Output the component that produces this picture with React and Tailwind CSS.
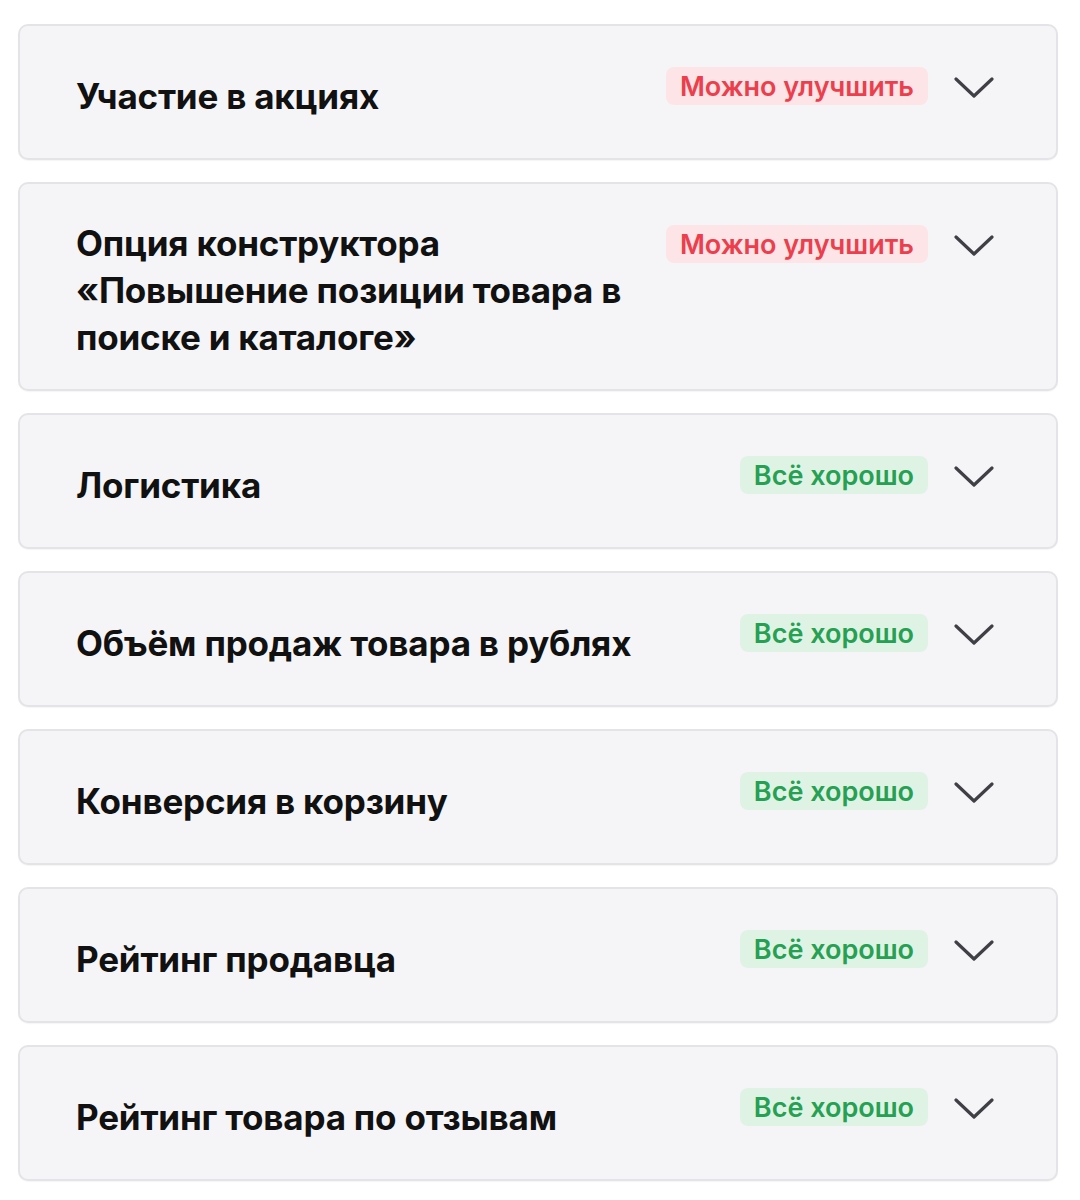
import React from 'react';

const items = [
  { title: 'Участие в акциях', status: 'bad' },
  { title: 'Опция конструктора «Повышение позиции товара в поиске и каталоге»', status: 'bad' },
  { title: 'Логистика', status: 'good' },
  { title: 'Объём продаж товара в рублях', status: 'good' },
  { title: 'Конверсия в корзину', status: 'good' },
  { title: 'Рейтинг продавца', status: 'good' },
  { title: 'Рейтинг товара по отзывам', status: 'good' },
];

const Chevron = () => (
  <svg width="40" height="24" viewBox="0 0 40 24" fill="none" className="shrink-0 mt-[4px]">
    <path d="M2 3 L20 20 L38 3" stroke="#3f3f46" strokeWidth="3.2" strokeLinecap="round" strokeLinejoin="round" />
  </svg>
);

const Badge = ({ status }) =>
  status === 'bad' ? (
    <span className="whitespace-nowrap rounded-[8px] bg-[#fde4e7] px-[14px] h-[38px] flex items-center text-[27px] font-semibold text-[#ec3f4d] leading-none">
      Можно улучшить
    </span>
  ) : (
    <span className="whitespace-nowrap rounded-[8px] bg-[#dff3e5] px-[14px] h-[38px] flex items-center text-[27px] font-semibold text-[#26a052] leading-none">
      Всё хорошо
    </span>
  );

export default function App() {
  return (
    <div className="min-h-screen bg-white pt-[24px] px-[18px] font-['Inter','Noto_Sans',sans-serif]">
      <div className="flex flex-col gap-[22px] w-[1040px]">
        {items.map((item, i) => (
          <div
            key={i}
            className="flex items-center gap-[16px] min-h-[136px] pt-[36px] pb-[28px] pl-[56px] pr-[62px] bg-[#f5f5f7] border-2 border-[#e4e4e8] rounded-[10px] shadow-[0_1px_1px_rgba(0,0,0,0.04)]"
          >
            <div className="flex-1 min-w-0">
              <div className="max-w-[575px] text-[35px] leading-[47px] font-bold text-[#111] tracking-[-0.2px]">
                {item.title}
              </div>
            </div>
            <div className="self-start mt-[5px] flex items-center gap-[26px] shrink-0">
              <Badge status={item.status} />
              <Chevron />
            </div>
          </div>
        ))}
      </div>
    </div>
  );
}
